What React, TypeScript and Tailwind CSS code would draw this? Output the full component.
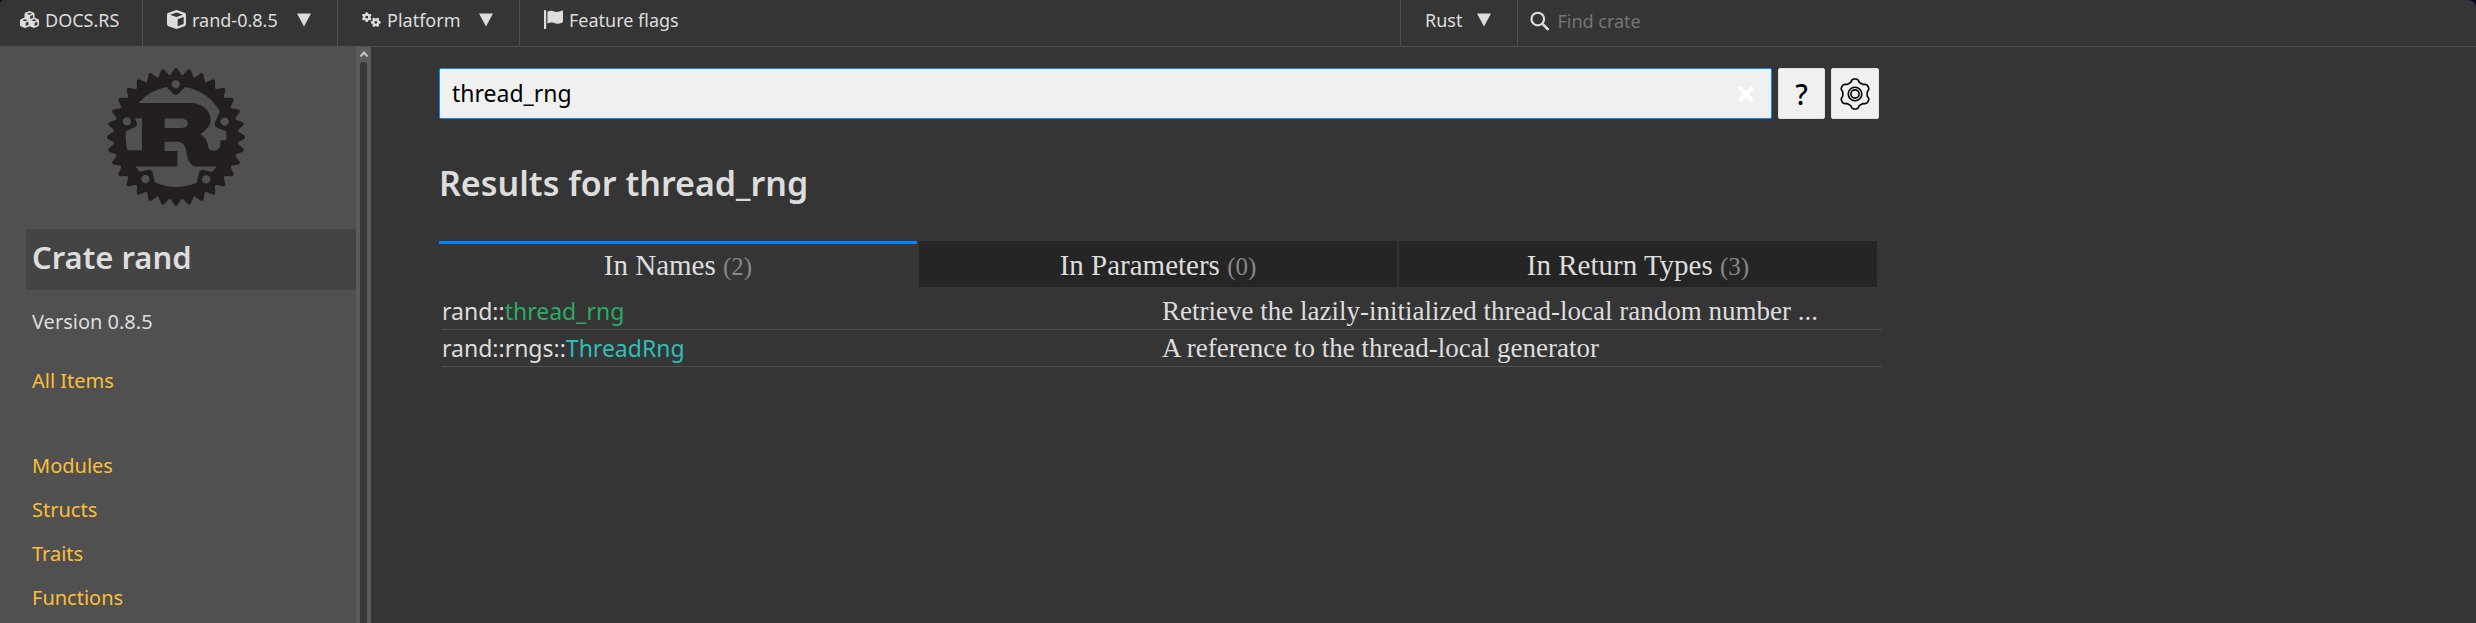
import { FaCube, FaCubes, FaGears } from "react-icons/fa6";
import { SiRust } from "react-icons/si";
import type { ReactNode } from "react";

function Caret() {
  return (
    <svg viewBox="0 0 14 14" className="h-3.5 w-3.5 fill-current" aria-hidden="true">
      <path d="M0 .5h14L7 13.5z" />
    </svg>
  );
}

function Flag() {
  return (
    <svg viewBox="0 0 19 19" className="h-[19px] w-[19px] fill-current" aria-hidden="true">
      <path d="M0 .8C0 .3.4 0 .9 0h.4c.5 0 .9.3.9.8V19H0z" />
      <path d="M3.4 1.8C5.2.9 7.4.5 9.3 1.2c2.6 1 4.8 1.3 8.5-.6.6-.3 1.2.1 1.2.7v10.2c0 .4-.2.7-.6.9-3 1.6-5.7 1.7-8.2.7-2.2-.9-4.6-.5-6.8.3z" />
    </svg>
  );
}

function gearPath(): string {
  const points: string[] = [];
  for (let i = 0; i <= 120; i++) {
    const a = (i / 120) * Math.PI * 2;
    const r = 13.6 + 1.5 * Math.tanh(1.8 * Math.cos(6 * a));
    const x = 16 + r * Math.sin(a);
    const y = 16 - r * Math.cos(a);
    points.push(`${x.toFixed(2)} ${y.toFixed(2)}`);
  }
  return `M${points.join("L")}Z`;
}

function Gear() {
  return (
    <svg viewBox="0 0 32 32" className="h-8 w-8 fill-none stroke-black" aria-hidden="true">
      <path d={gearPath()} strokeWidth="1.6" strokeLinejoin="round" />
      <circle cx="16" cy="16" r="6.8" strokeWidth="1.6" />
      <circle cx="16" cy="16" r="4.1" strokeWidth="1.6" />
    </svg>
  );
}

function NavItem({ icon, label, menu }: { icon: ReactNode; label: string; menu?: boolean }) {
  const body = (
    <>
      <span className="pb-0.5">{icon}</span>
      <span className="ml-1.5">{label}</span>
    </>
  );
  const cls = "flex h-full w-full items-center pb-1.5 pl-6";
  return menu ? (
    <button type="button" className={`${cls} pr-[26px]`}>
      {body}
      <span className="ml-auto">
        <Caret />
      </span>
    </button>
  ) : (
    <a href="#" className={cls}>
      {body}
    </a>
  );
}

function TopBar() {
  return (
    <nav className="flex h-[47px] items-stretch rounded-tl-sm rounded-tr-lg border-b border-[#505050] bg-[#353535] text-[18px]">
      <div className="-ml-1 w-[147px] border-r border-[#505050]">
        <NavItem icon={<FaCubes className="h-[19px] w-[19px]" />} label="DOCS.RS" />
      </div>
      <div className="w-[195px] border-r border-[#505050]">
        <NavItem icon={<FaCube className="h-[19px] w-[19px]" />} label="rand-0.8.5" menu />
      </div>
      <div className="w-[182px] border-r border-[#505050]">
        <NavItem icon={<FaGears className="h-[19px] w-[19px]" />} label="Platform" menu />
      </div>
      <div>
        <NavItem icon={<Flag />} label="Feature flags" />
      </div>
      <div className="ml-auto flex w-[1076px] shrink-0">
        <button type="button" className="flex w-[118px] items-center justify-between border-x border-[#505050] pr-[26px] pb-1.5 pl-6">
          Rust <Caret />
        </button>
        <label className="flex flex-1 items-center gap-2 pl-3 pb-1">
          <svg viewBox="0 0 20 20" className="h-5 w-5 fill-none stroke-current" aria-hidden="true">
            <circle cx="8" cy="8" r="6.5" strokeWidth="2.2" />
            <path d="M12.6 12.6L19 19" strokeWidth="2.6" />
          </svg>
          <input
            type="text"
            placeholder="Find crate"
            aria-label="Find crate"
            className="w-full bg-transparent outline-none placeholder:text-[#757575]"
          />
        </label>
      </div>
    </nav>
  );
}

const sections = ["Modules", "Structs", "Traits", "Functions"];

function Sidebar() {
  return (
    <aside className="flex w-[371px] shrink-0 bg-[#505050]">
      <div className="flex-1 pl-[26px]">
        <a href="#" aria-label="rand" className="flex justify-center pt-[21px] pr-[30px]">
          <SiRust className="h-[138px] w-[138px] text-[#231f1f]" />
        </a>
        <h2 className="mt-[23px] flex h-[61px] items-center bg-[#444444] pb-1 pl-1.5 text-[31px] font-semibold">
          Crate rand
        </h2>
        <div className="pl-1.5 text-[20px] leading-7">
          <p className="mt-[18px]">Version 0.8.5</p>
          <a href="#" className="mt-[31px] block text-[#fdbf35]">
            All Items
          </a>
          <ul className="mt-[57px] space-y-4 text-[#fdbf35]">
            {sections.map((s) => (
              <li key={s}>
                <a href="#">{s}</a>
              </li>
            ))}
          </ul>
        </div>
      </div>
      <div className="flex w-[15px] flex-col items-center bg-[#5b5b5b] pt-1">
        <svg viewBox="0 0 8 6" className="h-1.5 w-2 fill-none stroke-[#c8c8c8]" aria-hidden="true">
          <path d="M.5 5.5L4 1.5l3.5 4" strokeWidth="2" />
        </svg>
        <div className="mt-[5px] w-[7px] flex-1 rounded-t bg-[#37393a]" />
      </div>
    </aside>
  );
}

const tabs = [
  { label: "In Names", count: 2 },
  { label: "In Parameters", count: 0 },
  { label: "In Return Types", count: 3 },
];

const results = [
  {
    path: "rand::",
    name: "thread_rng",
    color: "text-[#2bab63]",
    desc: "Retrieve the lazily-initialized thread-local random number ...",
  },
  {
    path: "rand::rngs::",
    name: "ThreadRng",
    color: "text-[#2dbfb8]",
    desc: "A reference to the thread-local generator",
  },
];

function Results() {
  return (
    <main className="min-w-0 flex-1 pl-[68px] pt-[21px]">
      <div className="max-w-[1443px]">
        <form className="mr-[3px] flex h-[51px] gap-1.5 text-[23px] text-black">
          <div className="flex flex-1 items-center rounded-xs border border-[#008dfd] bg-[#f0f0f0] pl-3 pr-[17px]">
            <input
              type="text"
              aria-label="Search"
              defaultValue="thread_rng"
              className="min-w-0 flex-1 bg-transparent outline-none"
            />
            <button type="button" aria-label="Clear">
              <svg viewBox="0 0 16 16" className="h-4 w-4 fill-none stroke-white" aria-hidden="true">
                <path d="M1.5 1.5l13 13M14.5 1.5l-13 13" strokeWidth="4" />
              </svg>
            </button>
          </div>
          <button type="button" className="w-[47px] rounded-xs border border-[#e0e0e0] bg-[#f0f0f0] text-[28px] leading-8 font-medium">
            ?
          </button>
          <button
            type="button"
            aria-label="Settings"
            className="flex w-12 items-center justify-center rounded-xs border border-[#e0e0e0] bg-[#f0f0f0]"
          >
            <Gear />
          </button>
        </form>
        <h1 className="mt-[39px] text-[34px] leading-[50px] font-semibold">Results for thread_rng</h1>
        <div className="mt-[33px] mr-[5px] flex gap-0.5 font-['Liberation_Serif',serif] text-[29px]">
          {tabs.map((t, i) => (
            <button
              key={t.label}
              type="button"
              className={`h-[46px] flex-1 border-t-3 leading-10 ${
                i === 0 ? "border-[#0089ff] bg-[#353535]" : "border-[#252525] bg-[#252525]"
              }`}
            >
              {t.label} <span className="text-[25px] text-[#888888]">({t.count})</span>
            </button>
          ))}
        </div>
        <div className="pt-1.5 pl-[3px]">
          <table className="w-full table-fixed text-left text-[23px] leading-9">
            <tbody>
              {results.map((r) => (
                <tr key={r.name} className="border-b border-[#505050]">
                  <td className="p-0">
                    <a href="#">
                      {r.path}
                      <span className={r.color}>{r.name}</span>
                    </a>
                  </td>
                  <td className="truncate p-0 font-['Liberation_Serif',serif] text-[27px]">{r.desc}</td>
                </tr>
              ))}
            </tbody>
          </table>
        </div>
      </div>
    </main>
  );
}

export default function App() {
  return (
    <div className="flex min-h-screen flex-col bg-[#02061f] font-['Noto_Sans',sans-serif] text-[#dddddd]">
      <TopBar />
      <div className="flex flex-1 bg-[#353535]">
        <Sidebar />
        <Results />
      </div>
    </div>
  );
}
